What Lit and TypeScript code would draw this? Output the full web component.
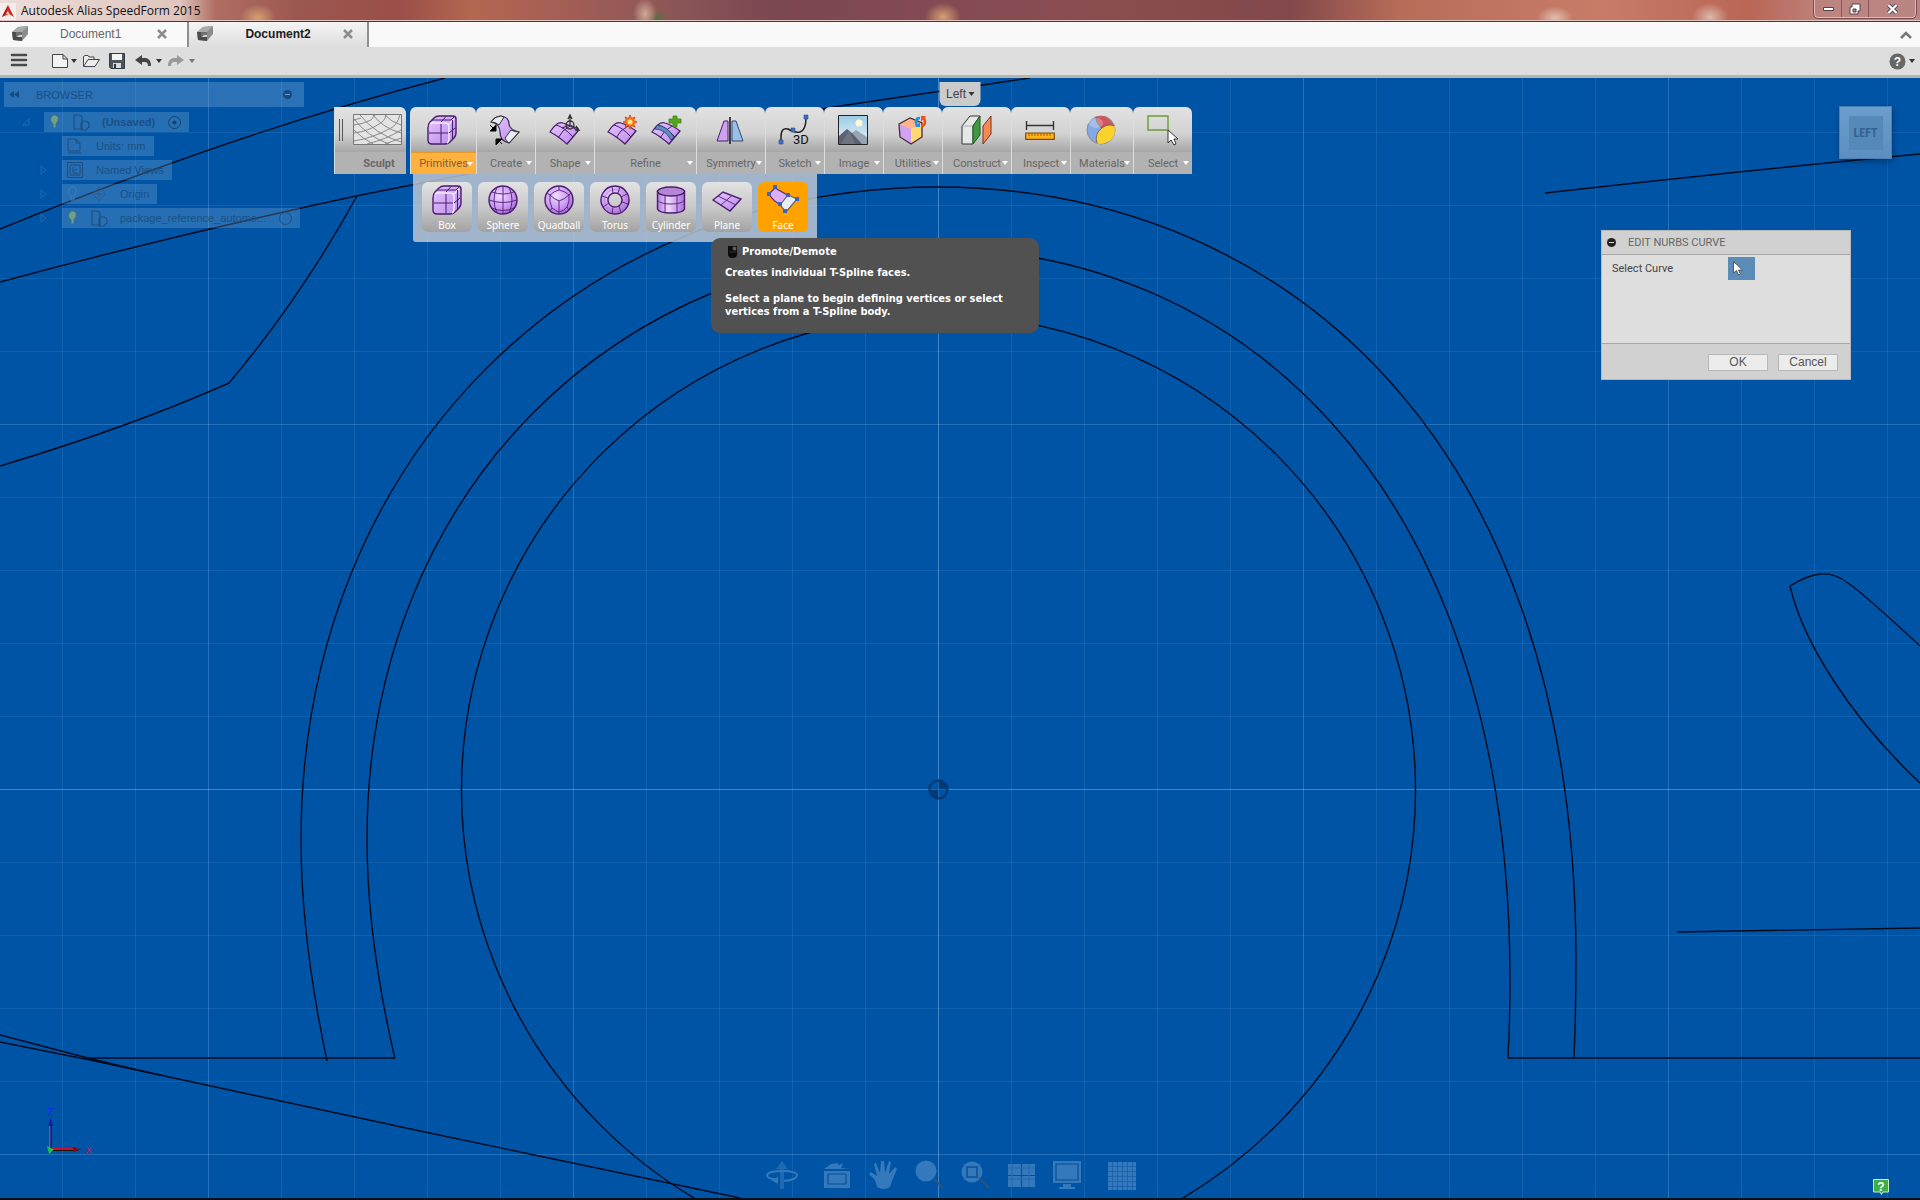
import { LitElement, html, svg, css, nothing, SVGTemplateResult } from "lit";
import { customElement, state } from "lit/decorators.js";

/** Reference curves of the imported package, in model view units. */
const CURVES: string[] = [
  // outer arch
  "M327 1061C312 990 301 915 301 840C301 455 581 187 938 187C1257 187 1576 410 1576 960Q1576 1010 1574 1058",
  // inner arch
  "M395 1059C379 990 367 915 367 839C367 491 618 249 938 249C1224 249 1510 468 1510 980Q1510 1020 1508 1058",
  // body side lines
  "M0 229Q240 131 445 78",
  "M0 282Q170 236 356 196Q640 140 840 106L1030 78",
  "M357 196Q300 299 229 383Q130 427 0 466",
  "M1545 193Q1750 170 1920 154",
  // mirror outline
  "M1790 586C1812 572 1830 569 1848 583Q1864 594 1920 646",
  "M1790 586C1803 642 1850 717 1920 783",
  "M1677 932L1920 928",
  // ground lines
  "M1508 1058H1920",
  "M85 1058H395",
  "M0 1035L88 1058Q120 1066 160 1075",
  "M0 1042L90 1060L160 1075L420 1131L740 1198",
];

const STEP = 73;
const CENTER_X = 938;
const CENTER_Y = 789;

const caret = html`<svg class="caret" viewBox="0 0 6 4"><path d="M0 0h6L3 4z" /></svg>`;

const cube = svg`
  <path d="M1 13Q1 9 3 7L7 3Q9 1 12 1H26Q29 1 29 4V18Q29 21 27 23L23 27Q21 29 18 29H5Q1 29 1 25z" fill="url(#purple)" stroke="#4b1c6e" stroke-width="1.4"/>
  <path d="M3 9Q5 7 9 8H18Q22 8 22 12V24Q22 27 20 28M22 9L27 4" fill="none" stroke="#f3e4ff" stroke-width="1.6"/>
  <path d="M14 9V28M2 18H21M14 7L19 1.500M5 5H24L27 2M25.500 5V24M22 18L28 13" fill="none" stroke="#4b1c6e"/>`;

const patch = svg`
  <path d="M1 17Q8 6 14 8Q21 10 29 16L18 29Q9 21 1 17z" fill="url(#purple)" stroke="#4b1c6e" stroke-width="1.3"/>
  <path d="M7 10Q15 12 24 22M9 23Q13 15 21 11" fill="none" stroke="#4b1c6e"/>`;

const ICONS: Record<string, SVGTemplateResult> = {
  box: cube,
  create: svg`
    <path d="M1 7Q5 1 11 1Q19 2 19 9Q20 15 29 17L19 28Q10 26 10 17Q10 9 1 7z" fill="url(#purple)" stroke="#3c2450" stroke-width="1.2"/>
    <path d="M1 7Q5 1 11 1L14 2L9 10Q6 7 1 7zM15 23L21 15Q25 17 29 17L19 28Q16 26 15 23z" fill="#e6ecf2" stroke="#333"/>
    <path d="M0 10L5 15M6 10V16H0zM12 29L7 24M6 30V24H12z" fill="#000" stroke="#000"/>`,
  shape: svg`
    ${patch}
    <g fill="none" stroke="#333" stroke-width="1.3"><circle cx="21" cy="10" r="4"/><path d="M21 10V1M19 4L21 0L23 4M21 10L13 13M21 10L29 14M26 15L30 15L27 11"/></g>`,
  refineA: svg`
    ${patch}
    <path d="M23 0L24.500 3.500L28 2L26.500 5.500L30 7L26.500 8.500L28 12L24.500 10.500L23 14L21.500 10.500L18 12L19.500 8.500L16 7L19.500 5.500L18 2L21.500 3.500z" fill="#ff7a1a" stroke="#d03c08" stroke-width=".8"/><circle cx="23" cy="7" r="2.500" fill="#ffe47a"/>`,
  refineB: svg`
    ${patch}
    <path d="M4 14Q14 14 20 25L23 22Q16 11 6 10z" fill="#5f8bc4" stroke="#26395c" stroke-width=".8"/>
    <path d="M22 1H26V4H30V8H26V12H22V8H18V4H22z" fill="#56a61c" stroke="#3b8610" stroke-width=".8"/>`,
  symmetry: svg`
    <path d="M13 6V26H2L9 6z" fill="#cfa2ef" stroke="#4b1c6e"/><path d="M17 6H21L28 26H17z" fill="#9dbfe4" stroke="#2c4d7c"/><path d="M15 2V29" stroke="#111" stroke-width="1.5"/>`,
  sketch: svg`
    <path d="M2 26V22Q2 12 9 14Q16 18 21 17Q27 15 27 3" fill="none" stroke="#222" stroke-width="1.5"/>
    <path d="M0 25H4V29H0zM12 13H16V17H12zM25 0H29V4H25z" fill="#3f6fc6" stroke="#294a8c" stroke-width=".6"/>
    <text x="14" y="29" font-size="13" fill="#111">3D</text>`,
  image: svg`
    <path d="M.5 .5H29.500V29.500H.5z" fill="url(#sky)" stroke="#222"/><circle cx="21" cy="8" r="3.5" fill="#fffbd0"/>
    <path d="M11 20L18 15L29 22V29H11z" fill="#9aa3b2"/><path d="M1 21L9 14L14 18L24 29H1z" fill="#5c6270"/><path d="M3 29L11 15L17 29z" fill="#6d7482"/>`,
  utilities: svg`
    <path d="M2 9L13 3L25 8L14 14z" fill="#ffb48a"/><path d="M2 9L14 14V29L3 22z" fill="#d0a3f2"/><path d="M14 14L25 9L24 23L14 29z" fill="#ffd873"/>
    <path d="M2 9L13 3L25 8V22L14 29L3 22z" fill="none" stroke="#4a2a2a" stroke-width="1.3"/>
    <path d="M23 3Q19 3 19 7Q19 10 21 11" fill="none" stroke="#1f8fea" stroke-width="2.6"/><path d="M18 12H23V7z" fill="#1f8fea"/><path d="M24 11Q28 11 28 7Q28 4 26 3" fill="none" stroke="#ee5020" stroke-width="2.6"/><path d="M24 7V1H29z" fill="#ee5020"/>`,
  construct: svg`
    <path d="M1 11L9 1H19L12 11V29H1z" fill="#e4e9e6" stroke="#333"/><path d="M1 11H12" stroke="#aaaabb"/><path d="M12 11L19 1V20L12 29z" fill="#3e9a3e" stroke="#1f5a24"/><path d="M22 11L30 1V19L22 29z" fill="#f58a52" stroke="#7a3318"/>`,
  inspect: svg`
    <path d="M1 10.500H29M1.500 6V15M28.500 6V15" stroke="#333" stroke-width="1.4"/><path d="M.7 18H29.300V24.300H.7z" fill="#ffb21c" stroke="#7e4e00" stroke-width="1.2"/>
    <path d="M4 18V21M7 18V21M10 18V21M13 18V21M16 18V21M19 18V21M22 18V21M25 18V21" stroke="#7e4e00" stroke-width=".8"/>`,
  materials: svg`
    <circle cx="15" cy="15" r="14" fill="#85a8e4" stroke="#8d8a98"/><path d="M10 2Q22-2 28 11L16 13Q10 9 10 2z" fill="#cf5560"/><path d="M16 13Q22 8 28.500 11Q31 24 19 28Q14 30 11 28Q8 19 16 13z" fill="#fbd22c"/>
    <path d="M10 2Q10 9 16 13Q8 19 11 28M16 13Q22 8 28 11" fill="none" stroke="#6a5a50" stroke-width=".8"/><ellipse cx="10" cy="8" rx="7" ry="5" fill="#fff" opacity=".25"/>`,
  select: svg`
    <path d="M1 1H21V15H1z" fill="none" stroke="#6b9c36" stroke-width="1.4"/>
    <path d="M21 15V28L24 25L27 30L29 29L27 24H31z" fill="#fff" stroke="#333"/>`,
  sphere: svg`
    <circle cx="15" cy="15" r="14" fill="url(#ball)" stroke="#4b1c6e" stroke-width="1.4"/>
    <path d="M15 1V29M1 15Q15 20 29 15M4 7Q15 11 26 7M4 23Q15 28 26 23M9 2Q3 15 9 28M21 2Q27 15 21 28" fill="none" stroke="#5c2b84"/>`,
  quadball: svg`
    <circle cx="15" cy="15" r="14" fill="url(#ball)" stroke="#4b1c6e" stroke-width="1.4"/>
    <path d="M6 10Q10 6 15 5Q21 6 25 10Q21 14 15 16Q10 14 6 10zM6 10Q5 17 8 23Q12 26 15 27Q20 26 23 22Q26 16 25 10M15 16V27M6 10L3 8M25 10L27 8M15 5V1M8 23L6 26M23 22L25 25M15 27V29" fill="none" stroke="#5c2b84"/>`,
  torus: svg`
    <path d="M15 1a14 14 0 1 0 .01 0zM15 8a7 7 0 1 1-.01 0z" fill="url(#ball)" fill-rule="evenodd" stroke="#4b1c6e" stroke-width="1.4"/>
    <circle cx="15" cy="15" r="10.5" fill="none" stroke="#b98ad9"/>
    <path d="M12 1L13 8M20 2L18 8M27 9L21 12M28 19L22 17M21 28L19 21M12 29L13 22M3 22L9 18M2 11L8 13" stroke="#5c2b84"/>`,
  cylinder: svg`
    <path d="M1.500 6V24Q3 28 15 28Q27 28 28.500 24V6z" fill="url(#tube)" stroke="#4b1c6e" stroke-width="1.4"/>
    <ellipse cx="15" cy="6.5" rx="13.5" ry="4.5" fill="#b486d6" stroke="#4b1c6e" stroke-width="1.4"/>
    <path d="M1.500 15Q4 19 15 19Q26 19 28.500 15M9 11V27.500M21 11V27.500" fill="none" stroke="#5c2b84"/>`,
  plane: svg`
    <path d="M1 15L11 7L29 14L18 26z" fill="url(#purple)" stroke="#4b1c6e" stroke-width="1.4"/><path d="M6 11L24 20M9 20L20 10.500" stroke="#5c2b84"/>`,
  face: svg`
    <path d="M1 9L7 3L21 11L13 20Q5 16 1 9z" fill="#dcaef5" stroke="#5c2b84" stroke-width="1.2"/><path d="M12 20L20 10L29 14L18 27z" fill="#e6edf2" stroke="#666" stroke-width="1.2"/>
    <path d="M5 0H9V4H5zM-1 7H3V11H-1zM18 8H22V12H18zM27 12H31V16H27zM10 17H14V21H10zM15 24H19V28H15z" fill="#3f62c2"/>`,
};

interface Tool {
  label: string;
  icons: string[];
  size: string;
}

const TOOLS: Tool[] = [
  { label: "Primitives", icons: ["box"], size: "w66" },
  { label: "Create", icons: ["create"], size: "w59" },
  { label: "Shape", icons: ["shape"], size: "w59" },
  { label: "Refine", icons: ["refineA", "refineB"], size: "w102" },
  { label: "Symmetry", icons: ["symmetry"], size: "w69" },
  { label: "Sketch", icons: ["sketch"], size: "w59" },
  { label: "Image", icons: ["image"], size: "w59" },
  { label: "Utilities", icons: ["utilities"], size: "w59" },
  { label: "Construct", icons: ["construct"], size: "w69" },
  { label: "Inspect", icons: ["inspect"], size: "w59" },
  { label: "Materials", icons: ["materials"], size: "w63" },
  { label: "Select", icons: ["select"], size: "w59" },
];

const PRIMITIVES = ["Box", "Sphere", "Quadball", "Torus", "Cylinder", "Plane", "Face"];

const NAV: { name: string; wide?: boolean; icon: SVGTemplateResult }[] = [
  { name: "Orbit", wide: true, icon: svg`<path d="M14 29V9H10L16 1L22 9H18V29z" opacity=".6"/><path d="M9 19.500Q1 18 1 15.500Q2 11 16 11Q31 11 31 15.500Q30 20 18 21" fill="none" stroke="currentColor" stroke-width="2"/><path d="M5 20L12 17V24z"/>` },
  { name: "Look at", icon: svg`<path d="M1 11H27V28H1zM1 9L8 4L14 3L18 8L27 9zM14 6L20 3L18 8z"/><path d="M5 14H23V24H5z" fill="none" stroke="#0d4f92" stroke-width="1.2"/>` },
  { name: "Pan", icon: svg`<path d="M8 27L6 20L0 14L2 12L8 16L5 4L7 3L11 13L12 1H15L16 13L20 1L22 2L20 14L26 7L28 9L23 21L21 27Q15 31 8 27z"/>` },
  { name: "Zoom", icon: svg`<circle cx="11" cy="11" r="10.5"/><path d="M18 18L28 28" stroke="#2d567f" stroke-width="2"/>` },
  { name: "Fit", icon: svg`<circle cx="11" cy="12" r="10.5"/><path d="M6 7H16V17H6z" fill="none" stroke="#0d4f92" stroke-width="1.5"/><path d="M18 18L28 28" stroke="#2d567f" stroke-width="2"/>` },
  { name: "Viewports", icon: svg`<path d="M1 4H28V27H1z"/><path d="M14.500 4V27M1 15.500H28" stroke="#0d4f92" stroke-width="1.2"/><path d="M1 8H28M1 19H28M5 4V27M22 4V27" stroke="#2a6db0"/>` },
  { name: "Display", icon: svg`<path d="M0 1H28V23H0zM10 24H18V27H22V29H6V27H10z"/><path d="M3 4H25V20H3z" fill="none" stroke="#0d4f92" stroke-width="1.2"/>` },
  { name: "Grid", wide: true, icon: svg`<path d="M2 2H30V30H2z"/><path d="M6.500 2V30M11.500 2V30M16.500 2V30M21.500 2V30M26.500 2V30M2 6.500H30M2 11.500H30M2 16.500H30M2 21.500H30M2 26.500H30" stroke="#1c62a8" stroke-width=".8"/>` },
];

interface NodeIcon {
  box: string;
  width: number;
  art: SVGTemplateResult;
}

const BULB: NodeIcon = { box: "2 0 11 16", width: 11, art: svg`<path d="M5 9Q2 6 4 3Q6 0 9 1Q13 3 11 7L9 10V14H6V10z" fill="#6f9f86" stroke="#2f6d9a"/>` };
const BULB_OFF: NodeIcon = { box: "2 0 11 16", width: 11, art: svg`<path d="M5 9Q2 6 4 3Q6 0 9 1Q13 3 11 7L9 10V14H6V10z" fill="none" stroke="#3a7fbe"/>` };
const PART: NodeIcon = { box: "0 0 16 16", width: 16, art: svg`<path d="M1 1H7L9 3V15H1zM9 7H13L16 9V13L13 16H8V9z" fill="none" stroke="#1f4f80" stroke-width="1.2"/>` };
const SHEET: NodeIcon = { box: "0 0 16 16", width: 16, art: svg`<path d="M1 1H9L13 5V13H1zM9 1V5H13M1 15H14" fill="none" stroke="#1f4f80"/>` };
const VIEWS: NodeIcon = { box: "0 0 16 16", width: 16, art: svg`<path d="M.5 .5H15.500V15.500H.5zM3 3H13V13H3zM6 5V11H11M7 9L10 7" fill="none" stroke="#1f4f80"/>` };
const AXES: NodeIcon = { box: "0 0 16 16", width: 16, art: svg`<path d="M8 1L14 8L8 15L2 8zM8 4V12M4 8H12" fill="none" stroke="#2d5d8c"/>` };

const nodeIcon = (i: NodeIcon) => html`<svg width=${i.width} height="16" viewBox=${i.box}>${i.art}</svg>`;

@customElement("app-root")
export class AppRoot extends LitElement {
  @state() private active = "Face";

  static styles = css`
    :host {
      display: block;
      font-family: "Liberation Sans", Arial, sans-serif;
      font-size: 12px;
      color: #3c3c3c;
    }
    * { box-sizing: border-box; }
    button {
      border: 0;
      padding: 0;
      margin: 0;
      background: none;
      font: inherit;
      color: inherit;
      display: flex;
      align-items: center;
    }
    svg { display: block; flex: none; overflow: visible; }
    .app { display: flex; flex-direction: column; height: 100vh; overflow: hidden; background: #0a0f18; }

    .title {
      display: flex;
      height: 22px;
      align-items: stretch;
      justify-content: space-between;
      border-bottom: 1px solid #55303a;
      box-shadow: inset 0 -1px 0 #e2c6bd;
      background:
        radial-gradient(ellipse 18px 14px at 258px 18px, #d6a070, transparent),
        radial-gradient(ellipse 12px 16px at 645px 14px, #cfa996, transparent),
        radial-gradient(ellipse 10px 10px at 658px 20px, #4e7046, transparent),
        radial-gradient(ellipse 18px 14px at 943px 17px, #d6a070, transparent),
        radial-gradient(ellipse 18px 12px at 1555px 18px, #e2bdb0, transparent),
        radial-gradient(ellipse 18px 14px at 1710px 17px, #dcb8ac, transparent),
        linear-gradient(90deg, #ecdcd8 0, #dfc5bd 180px, #b06e62 215px, #9c5650 300px, #9a4f48 400px, #b26750 470px, #a45e55 560px, #8a5557 680px, #7a4650 780px, #834a55 920px, #8a4d50 1100px, #83484b 1290px, #b66d58 1400px, #c77c68 1600px, #b96656 1750px, #bd8580 1830px, #b98584 100%);
    }
    .brand { display: flex; align-items: center; gap: 5px; font-family: "Open Sans", "Noto Sans", sans-serif; color: #111; }
    .brand-text { line-height: 16px; }
    .window { display: flex; height: 18px; margin-right: 4px; border: 1px solid #e0bcb8; border-top: 0; border-radius: 0 0 4px 4px; outline: 1px solid #7a4a4c; }
    .window button { width: 27px; justify-content: center; border-right: 1px solid #8a585a; }
    .window button:last-child { width: 46px; border-right: 0; }

    .tabs { display: flex; height: 25px; background: #f9f9f9; align-items: stretch; }
    .tab { display: flex; align-items: center; padding: 0 20px 2px 12px; border-right: 2px solid #8f8f8f; }
    .tab .name { gap: 31px; color: #666; }
    .tab .close { margin-left: 36px; }
    .tab.current { background: linear-gradient(#f4f4f4, #dedede); padding: 0 14px 2px 8px; }
    .tab.current .name { color: #1c1c1c; font-weight: bold; }
    .tab.current .close { margin-left: 32px; }
    .collapse { margin: 0 8px 0 auto; }

    .bar { display: flex; height: 31px; background: #dedede; border-bottom: 3px solid #b4b4b0; align-items: center; padding: 0 5px 0 11px; }
    .bar .file { display: flex; gap: 6px; margin-left: 25px; }
    .bar button { gap: 3px; height: 26px; }
    .bar .help { margin-left: auto; }
    .caret { width: 6px; height: 4px; fill: #333; }
    .faded .caret { fill: #777; }

    .view { position: relative; flex: 1; min-height: 0; margin-bottom: 2px; overflow: hidden; background: #0054a6; }
    .model { width: 100%; height: 100%; }
    .model text { font: 11px "Liberation Sans", Arial, sans-serif; }

    .browser { position: absolute; left: 4px; top: 4px; width: 300px; display: flex; flex-direction: column; gap: 4px; color: #1b4f86; font-size: 11px; }
    .browser-head { display: flex; align-items: center; gap: 17px; height: 25px; padding: 0 12px 0 5px; background: rgba(150, 190, 225, .28); margin-bottom: 1px; }
    .browser-head .pin { margin-left: auto; }
    .row { display: flex; align-items: center; gap: 14px; height: 20px; }
    .row .twist { width: 8px; }
    .row.root { padding-left: 18px; font-weight: bold; }
    .row.child { padding-left: 36px; }
    .cell { display: flex; align-items: center; gap: 13px; height: 20px; padding: 0 8px 0 5px; background: rgba(150, 190, 225, .25); }

    .orient { position: absolute; left: 50%; top: 4px; transform: translateX(-50%); width: 41px; height: 24px; justify-content: center; gap: 2px; background: #cbcbcb; border-radius: 0 0 6px 6px; color: #444; }

    .ribbon { position: absolute; left: 334px; top: 29px; display: flex; flex-direction: column; align-items: flex-start; font-family: Roboto, sans-serif; }
    .tools { display: flex; }
    .tool { flex-direction: column; align-items: stretch; height: 67px; border-radius: 6px 6px 0 0; overflow: hidden; background: linear-gradient(#e2e2e2, #d2d2d2 40%, #a6a6a6 45px, #b2b2b2 45px); border-left: 1px solid #dcdcdc; color: #666; }
    .tool .icons { display: flex; justify-content: center; align-items: center; gap: 14px; height: 45px; padding-right: 3px; }
    .tool .label { display: flex; align-items: center; justify-content: center; height: 22px; font-size: 11px; position: relative; }
    .tool .label svg { position: absolute; right: 3px; top: 9px; fill: #fff; }
    .w59 { width: 59px; }
    .w63 { width: 63px; }
    .w66 { width: 66px; }
    .w69 { width: 69px; }
    .w102 { width: 102px; }
    .sculpt { width: 72px; margin-right: 4px; border-radius: 0 6px 0 0; }
    .sculpt .icons { gap: 10px; padding-right: 0; }
    .sculpt .label { font-weight: bold; padding-left: 17px; }
    .open .label { background: #ffb13d; border-top: 1px solid #e39a2a; color: #7d6038; }
    .flyout { display: flex; gap: 6px; margin-left: 79px; padding: 8px 9px 10px; background: rgba(200, 205, 212, .8); border-radius: 0 0 3px 3px; }
    .prim { flex-direction: column; width: 50px; height: 50px; padding-top: 3px; border-radius: 6px; background: linear-gradient(#e2e2e2, #c9c9c9 50%, #a2a2a2); color: #fff; font: 10px/14px "Noto Sans", sans-serif; gap: 3px; }
    .prim.active { background: #ffa200; }

    .tip { position: absolute; left: 711px; top: 160px; width: 328px; height: 95px; padding: 7px 14px; border-radius: 9px; background: #515151; color: #fff; font: bold 11px/13px "DejaVu Sans Condensed", "DejaVu Sans", sans-serif; }
    .tip-head { display: flex; align-items: center; gap: 5px; padding-left: 3px; }
    .tip p { margin: 8px 0 0; }
    .tip p + p { margin-top: 13px; }

    .dialog { position: absolute; right: 69px; top: 152px; width: 250px; border: 1px solid #b8b8b8; background: #dedede; color: #444; font: 11px/14px Roboto, sans-serif; }
    .dialog-head { display: flex; align-items: center; gap: 12px; height: 24px; padding: 0 5px; background: #d1d1d1; border-bottom: 1px solid #a6a6a6; color: #666; }
    .dialog-body { display: grid; grid-template-columns: 116px auto; align-items: start; height: 88px; padding: 1px 10px; }
    .dialog-body label { line-height: 25px; }
    .pick { width: 27px; height: 23px; background: #5b8cb8; padding-left: 5px; margin-top: 1px; }
    .dialog-foot { display: flex; justify-content: flex-end; align-items: flex-start; gap: 10px; height: 36px; padding: 10px 12px; background: #d1d1d1; border-top: 1px solid #a6a6a6; }
    .dialog-foot button { width: 60px; height: 17px; justify-content: center; background: #ececec; border: 1px solid #b8b8b8; color: #555; font: 12px/15px "Liberation Sans", Arial, sans-serif; }

    .cube { position: absolute; right: 28px; top: 28px; width: 53px; height: 53px; justify-content: center; background: linear-gradient(#6c9dcc, #5c8fc0); border: 1px solid #4a80b5; box-shadow: 1px 3px 6px rgba(0, 20, 50, .4); }
    .cube span { display: grid; place-items: center; width: 34px; height: 34px; background: #5489ba; color: #35618f; font: bold 12px "Roboto Condensed", Roboto, sans-serif; }

    .nav { position: absolute; left: 50%; bottom: 8px; transform: translateX(-50%); display: flex; margin-left: -8px; color: #3b7fc0; fill: currentColor; opacity: .88; }
    .nav button { width: 46px; justify-content: center; }
    .nav .wide { width: 64px; }
    .feedback { position: absolute; right: 31px; bottom: 3px; }
  `;

  private grid() {
    const lines: SVGTemplateResult[] = [];
    for (let i = -14; i <= 14; i++) {
      const x = CENTER_X + i * STEP + 0.5;
      const y = CENTER_Y + i * STEP + 0.5;
      const o = i === 0 ? 0.36 : i % 5 === 0 ? 0.22 : 0.1;
      lines.push(svg`<path d="M${x} 0V1300M-200 ${y}H2200" stroke="#b4d8ff" stroke-opacity=${o}/>`);
    }
    return lines;
  }

  private model() {
    return html`<svg class="model" viewBox="0 78 1920 1120" preserveAspectRatio="xMidYMid slice" role="img" aria-label="Left view">
      <defs>
        <linearGradient id="purple" x1="0" y1="0" x2="1" y2="1"><stop offset="0" stop-color="#e6c6ff" /><stop offset="1" stop-color="#b98aea" /></linearGradient>
        <radialGradient id="ball" cx=".4" cy=".35" r=".7"><stop offset="0" stop-color="#efdcff" /><stop offset=".6" stop-color="#cc9bf2" /><stop offset="1" stop-color="#a265d4" /></radialGradient>
        <linearGradient id="tube"><stop offset="0" stop-color="#b27be0" /><stop offset=".4" stop-color="#eed8ff" /><stop offset="1" stop-color="#a86cd9" /></linearGradient>
        <linearGradient id="sky" x1="0" y1="0" x2="0" y2="1"><stop offset="0" stop-color="#9ccbe8" /><stop offset="1" stop-color="#e8f3f6" /></linearGradient>
      </defs>
      ${this.grid()}
      <g fill="none" stroke="#020b1e" stroke-width="1.4">
        <ellipse cx="938.5" cy="790" rx="477" ry="475" />
        ${CURVES.map((d) => svg`<path d=${d} />`)}
      </g>
      <circle cx="938.5" cy="789.5" r="9" fill="none" stroke="#00366f" stroke-width="2.5" opacity=".8" />
      <path d="M938.500 789.500V780.500A9 9 0 0 1 947.500 789.500zM938.500 789.500V798.500A9 9 0 0 1 929.500 789.500z" fill="#00366f" opacity=".8" />
      <path d="M50 1149V1121" stroke="#5a55f0" stroke-width="2" /><path d="M51 1149V1121M52 1150.500H78" stroke="#111" />
      <path d="M48 1126L50.500 1118L53 1126z" fill="#1a1aa8" />
      <path d="M52 1149H74" stroke="#d0102a" stroke-width="2" /><path d="M73 1147L81 1149.500L73 1152z" fill="#7a0c18" />
      <path d="M47 1146L54 1149.500L49 1154z" fill="#19c44a" />
      <text x="47" y="1116" fill="#2222ff">Z</text>
      <text x="86" y="1153" fill="#d2144a">x</text>
    </svg>`;
  }

  private tab(name: string, current: boolean) {
    return html`<div class="tab ${current ? "current" : ""}">
      <button class="name">
        <svg width="17" height="17" viewBox="0 0 17 17"><path d="M0 7L6 2L16 1V9L10 16L1 15z" fill="#8c8c8c" /><path d="M0 7L6 2L16 1L10 7z" fill="#a9a9a9" /><path d="M0 7H4V12H10V16L1 15z" fill="#4c4c4c" /><path d="M4 7H10V12H4z" fill="#707070" /><path d="M5 12L7 10H10V12z" fill="#d4d4d4" /></svg>
        <span>${name}</span>
      </button>
      <button class="close" aria-label="Close ${name}"><svg width="10" height="10" viewBox="0 0 10 10"><path d="M1 1L9 9M9 1L1 9" stroke="#8c8c8c" stroke-width="2.5" /></svg></button>
    </div>`;
  }

  private child(label: string, icons: NodeIcon[], twist: boolean, ring = false) {
    return html`<div class="row child">
      <span class="twist">${twist ? html`<svg width="7" height="10" viewBox="0 0 7 10"><path d="M1 1L6 5L1 9z" fill="none" stroke="#2468ad" /></svg>` : nothing}</span>
      <div class="cell">
        ${icons.map(nodeIcon)}
        <span>${label}</span>
        ${ring ? html`<svg width="13" height="13" viewBox="0 0 13 13"><circle cx="6.5" cy="6.5" r="6" fill="none" stroke="#1f4f80" /></svg>` : nothing}
      </div>
    </div>`;
  }

  private browser() {
    return html`<aside class="browser">
      <div class="browser-head">
        <svg width="10" height="7" viewBox="0 0 10 7" fill="#174a80"><path d="M5 0V7L0 3.500zM10 0V7L5 3.500z" /></svg>
        <span>BROWSER</span>
        <svg class="pin" width="9" height="9" viewBox="0 0 9 9"><circle cx="4.5" cy="4.5" r="4.5" fill="#174a80" /><path d="M2 4.500H7" stroke="#6fa0cf" /></svg>
      </div>
      <div class="row root">
        <svg width="8" height="8" viewBox="0 0 8 8"><path d="M7 1V7H1z" fill="none" stroke="#2468ad" /></svg>
        <div class="cell">
          ${nodeIcon(BULB)} ${nodeIcon(PART)}
          <span>(Unsaved)</span>
          <svg width="13" height="13" viewBox="0 0 13 13"><circle cx="6.5" cy="6.5" r="6" fill="none" stroke="#17426f" /><circle cx="6.5" cy="6.5" r="2" fill="#17426f" /></svg>
        </div>
      </div>
      ${this.child("Units: mm", [SHEET], false)}
      ${this.child("Named Views", [VIEWS], true)}
      ${this.child("Origin", [BULB_OFF, AXES], true)}
      ${this.child("package_reference_automo...", [BULB, PART], true, true)}
    </aside>`;
  }

  private ribbon() {
    return html`<div class="ribbon">
      <div class="tools">
        <button class="tool sculpt">
          <span class="icons">
            <svg width="4" height="22" viewBox="0 0 4 22"><path d="M.5 0V22M3.500 0V22" stroke="#555" /></svg>
            <svg width="49" height="31" viewBox="0 0 49 31">
              <path d="M.5 .5H48.500V30.500H.5z" fill="#e4e4e4" stroke="#777" />
              <path d="M1 5Q14 22 36 30M1 16Q10 25 20 30M7 1Q22 20 48 28M20 1Q30 14 48 19M32 1Q38 8 48 11M1 27Q20 24 38 14Q44 11 47 1M1 19Q16 17 26 10Q32 7 33 1M1 11Q10 10 18 6L22 1M14 30Q34 25 48 16M32 30L48 24M1 6L8 4" fill="none" stroke="#8a8a8a" />
            </svg>
          </span>
          <span class="label">Sculpt</span>
        </button>
        ${TOOLS.map(
          (t) => html`<button class="tool ${t.size} ${t.label === "Primitives" ? "open" : ""}">
            <span class="icons">${t.icons.map((i) => html`<svg width="30" height="30" viewBox="0 0 30 30">${ICONS[i]}</svg>`)}</span>
            <span class="label"><span>${t.label}</span>${caret}</span>
          </button>`
        )}
      </div>
      <div class="flyout">
        ${PRIMITIVES.map(
          (p) => html`<button class="prim ${p === this.active ? "active" : ""}" @click=${() => (this.active = p)}>
            <svg width="30" height="30" viewBox="0 0 30 30">${ICONS[p.toLowerCase()]}</svg><span>${p}</span>
          </button>`
        )}
      </div>
    </div>`;
  }

  private dialog() {
    return html`<section class="dialog" aria-label="Edit NURBS curve">
      <div class="dialog-head">
        <svg width="9" height="9" viewBox="0 0 9 9"><circle cx="4.5" cy="4.5" r="4.5" fill="#222" /><path d="M2 4.500H7" stroke="#ddd" /></svg>
        <span>EDIT NURBS CURVE</span>
      </div>
      <div class="dialog-body">
        <label for="pick">Select Curve</label>
        <button class="pick" id="pick"><svg width="10" height="15" viewBox="0 0 10 15"><path d="M.5 .5V12L3.500 9.500L5.500 14L7.500 13L5.500 9H9.500z" fill="#fff" stroke="#444" stroke-width=".8" /></svg></button>
      </div>
      <div class="dialog-foot"><button>OK</button><button>Cancel</button></div>
    </section>`;
  }

  render() {
    return html`<div class="app">
      <header class="title">
        <div class="brand">
          <svg width="16" height="18" viewBox="0 0 16 18"><path d="M0 1H16V18H0z" fill="#f3eeee" /><path d="M8 3L14 15L9 12L2 15z" fill="#d8281c" /><path d="M8 3L5 12L2 15z" fill="#8e1712" /><path d="M8 9L9 12H6z" fill="#fff" /></svg>
          <span class="brand-text">Autodesk Alias SpeedForm 2015</span>
        </div>
        <div class="window">
          <button aria-label="Minimize"><svg width="11" height="4" viewBox="0 0 11 4"><path d="M.5 .5H10.500V3.500H.5z" fill="#fff" stroke="#54434a" /></svg></button>
          <button aria-label="Restore"><svg width="12" height="12" viewBox="0 0 12 12"><path d="M3 1H11V8H9V11H1V4H3z" fill="#fff" stroke="#54434a" /><path d="M4 6H7V9H4z" fill="#b98584" stroke="#54434a" /></svg></button>
          <button aria-label="Close window"><svg width="11" height="10" viewBox="0 0 11 10"><path d="M1.500 1L9.500 9M9.500 1L1.500 9" stroke="#54434a" stroke-width="4" /><path d="M1.500 1L9.500 9M9.500 1L1.500 9" stroke="#fff" stroke-width="2.3" /></svg></button>
        </div>
      </header>
      <nav class="tabs">
        ${this.tab("Document1", false)} ${this.tab("Document2", true)}
        <button class="collapse" aria-label="Collapse"><svg width="12" height="8" viewBox="0 0 12 8"><path d="M1 7L6 2L11 7" fill="none" stroke="#777" stroke-width="2.5" /></svg></button>
      </nav>
      <div class="bar">
        <button aria-label="Menu"><svg width="16" height="14" viewBox="0 0 16 14"><path d="M1 1H15M1 6H15M1 11H15" stroke="#4a4a4a" stroke-width="2.6" stroke-linecap="round" /></svg></button>
        <div class="file">
          <button aria-label="New"><svg width="16" height="14" viewBox="0 0 16 14"><path d="M.5 .5H11L15.500 5V13.500H.5zM11 .5V5H15.500" fill="#f3f3f3" stroke="#444" /></svg>${caret}</button>
          <button aria-label="Open"><svg width="20" height="12" viewBox="0 0 20 12"><path d="M.5 11V1.500L2 .5H5L6 2H11V4.500M.5 11.500L5 4.500H16.500L12 11.500z" fill="#ececec" stroke="#3f4650" /></svg></button>
          <button aria-label="Save"><svg width="20" height="16" viewBox="0 0 20 16"><path d="M.5 .5H15.500V15.500H2L.5 14z" fill="#4e545c" stroke="#333a42" /><path d="M3 1H13V7H3z" fill="#f4f4f4" /><path d="M4 10H12V15H4z" fill="#d6dadf" /><path d="M5 11H7V15H5z" fill="#333" /></svg></button>
          <button aria-label="Undo"><svg width="18" height="12" viewBox="0 0 18 12"><path d="M0 5L7 0V3H11Q16 4 16 11H13Q13 7 10 7H7V10z" fill="#444" /></svg>${caret}</button>
          <button class="faded" aria-label="Redo"><svg width="18" height="12" viewBox="0 0 18 12"><path d="M16 5L9 0V3H5Q0 4 0 11H3Q3 7 6 7H9V10z" fill="#999" /></svg>${caret}</button>
        </div>
        <button class="help" aria-label="Help"><svg width="17" height="17" viewBox="0 0 17 17"><circle cx="8.5" cy="8.5" r="8" fill="#666" /><text x="8.5" y="13" text-anchor="middle" font-size="12" font-weight="bold" fill="#fff">?</text></svg>${caret}</button>
      </div>
      <main class="view">
        ${this.model()} ${this.browser()}
        <button class="orient">Left ${caret}</button>
        ${this.ribbon()}
        <div class="tip" role="tooltip">
          <div class="tip-head">
            <svg width="9" height="12" viewBox="0 0 9 12"><path d="M0 0H9V8Q9 12 4.500 12Q0 12 0 8z" fill="#0c0c0c" /><path d="M5 1H8V4H5zM1 6H8" fill="#666" stroke="#555" stroke-width=".6" /></svg>
            <span>Promote/Demote</span>
          </div>
          <p>Creates individual T-Spline faces.</p>
          <p>Select a plane to begin defining vertices or select vertices from a T-Spline body.</p>
        </div>
        <button class="cube"><span>LEFT</span></button>
        ${this.dialog()}
        <div class="nav">
          ${NAV.map((n) => html`<button class=${n.wide ? "wide" : ""} aria-label=${n.name}><svg width=${n.wide ? 32 : 29} height="30" viewBox="0 0 ${n.wide ? 32 : 29} 30">${n.icon}</svg></button>`)}
        </div>
        <button class="feedback" aria-label="Feedback"><svg width="16" height="16" viewBox="0 0 16 16"><path d="M.5 .5H15.500V13H10L8.500 15.500L7 13H.5z" fill="#3fae49" stroke="#c9efc6" /><text x="8" y="11.5" text-anchor="middle" font-size="12" font-weight="bold" fill="#fff">?</text></svg></button>
      </main>
    </div>`;
  }
}
